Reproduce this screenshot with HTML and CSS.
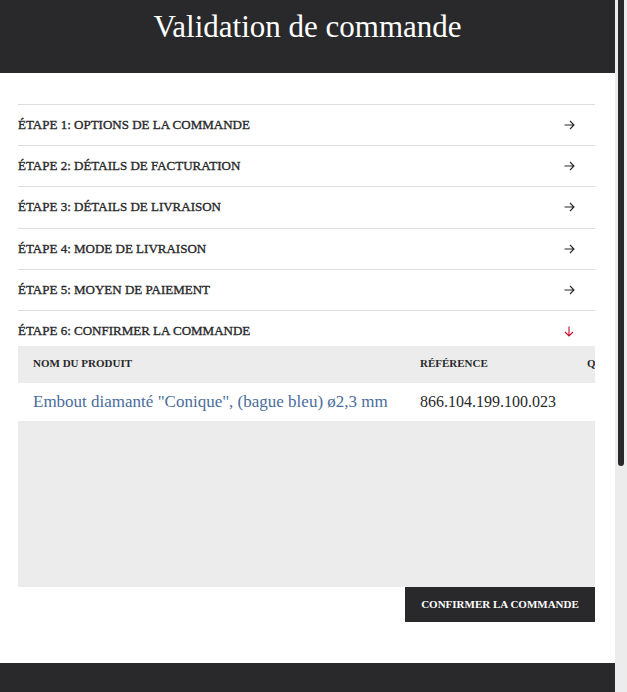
FILE: index.html
```html
<!DOCTYPE html>
<html lang="fr">
<head>
<meta charset="utf-8">
<title>Validation de commande</title>
<link rel="stylesheet" href="styles.css">
</head>
<body>
<div class="page">
<header class="page-header">
  <h1 class="page-title">Validation de commande</h1>
</header>
<main class="checkout">
  <div class="step"><span class="step-title">Étape 1: Options de la commande</span><svg class="step-icon" viewBox="0 0 11 10" width="11" height="10"><path d="M0.5 5H10M6 1l4 4-4 4"/></svg></div>
  <div class="step"><span class="step-title">Étape 2: Détails de facturation</span><svg class="step-icon" viewBox="0 0 11 10" width="11" height="10"><path d="M0.5 5H10M6 1l4 4-4 4"/></svg></div>
  <div class="step"><span class="step-title">Étape 3: Détails de livraison</span><svg class="step-icon" viewBox="0 0 11 10" width="11" height="10"><path d="M0.5 5H10M6 1l4 4-4 4"/></svg></div>
  <div class="step"><span class="step-title">Étape 4: Mode de livraison</span><svg class="step-icon" viewBox="0 0 11 10" width="11" height="10"><path d="M0.5 5H10M6 1l4 4-4 4"/></svg></div>
  <div class="step"><span class="step-title">Étape 5: Moyen de paiement</span><svg class="step-icon" viewBox="0 0 11 10" width="11" height="10"><path d="M0.5 5H10M6 1l4 4-4 4"/></svg></div>
  <div class="step step-open"><span class="step-title">Étape 6: Confirmer la commande</span><svg class="step-icon step-icon-open" viewBox="0 0 10 11" width="10" height="11"><path d="M5 0.5V10M1 6l4 4 4-4"/></svg></div>
  <div class="step-body">
    <div class="table-wrap">
      <table class="order-table">
        <colgroup><col class="col-name"><col class="col-ref"><col class="col-qty"></colgroup>
        <thead>
          <tr><th>Nom du produit</th><th>Référence</th><th>Quantité</th></tr>
        </thead>
        <tbody>
          <tr><td><a class="product-link" href="#">Embout diamanté "Conique", (bague bleu) ø2,3 mm</a></td><td class="ref-cell">866.104.199.100.023</td><td class="qty-cell"></td></tr>
        </tbody>
      </table>
    </div>
    <div class="actions"><button class="btn-confirm" type="button">Confirmer la commande</button></div>
  </div>
</main>
<footer class="page-footer"></footer>
</div>
<div class="scrollbar" aria-hidden="true"><div class="scrollbar-thumb"></div></div>
</body>
</html>
```
FILE: styles.css
```css
html, body { margin: 0; background: #fff; }
body {
  display: grid;
  grid-template-columns: 1fr 12px;
  align-items: start;
  font-family: "Liberation Serif", "Times New Roman", serif;
  color: #29292b;
}
.page { min-width: 0; }
.scrollbar {
  position: sticky;
  top: 0;
  height: 100vh;
  background: #ececec;
}
.scrollbar-thumb {
  width: 6px;
  height: 466px;
  margin-left: 3px;
  background: #29292b;
  border-radius: 0 0 3px 3px;
}
.page-header {
  background: #29292b;
  height: 73px;
  box-sizing: border-box;
  padding-top: 9px;
}
.page-title {
  margin: 0;
  font-weight: normal;
  font-size: 31px;
  line-height: 36px;
  color: #fff;
  text-align: center;
}
.checkout {
  padding: 31px 20px 41px 18px;
}
.step {
  display: flex;
  justify-content: space-between;
  align-items: flex-start;
  box-sizing: border-box;
  height: 41.2px;
  padding-top: 12px;
  line-height: 16px;
  border-top: 1px solid #dddddd;
  font-size: 13px;
  text-transform: uppercase;
}
.step-title { -webkit-text-stroke: 0.35px #29292b; }
.step-icon {
  margin: 3px 20px 0 0;
  fill: none;
  stroke: #29292b;
  stroke-width: 1.1;
}
.step-icon-open { stroke: #c8102e; margin-right: 21px; }
.step-open { height: 36px; }
.table-wrap {
  background: #ececec;
  height: 241px;
  overflow: hidden;
}
.order-table {
  table-layout: fixed;
  width: 654px;
  border-collapse: collapse;
}
.col-name { width: 387px; }
.col-ref { width: 167px; }
.col-qty { width: 100px; }
.order-table th {
  box-sizing: border-box;
  text-align: left;
  font-size: 11px;
  font-weight: bold;
  text-transform: uppercase;
  height: 37px;
  padding: 0 15px 2px;
  white-space: nowrap;
}
.order-table td {
  background: #fff;
  height: 38px;
  padding: 0 15px;
  font-size: 16px;
  white-space: nowrap;
}
.product-link { color: #4a6d9c; text-decoration: none; font-size: 17px; }
.actions { display: flex; justify-content: flex-end; }
.btn-confirm {
  background: #29292b;
  color: #fff;
  border: 0;
  height: 35px;
  width: 190px;
  font-family: inherit;
  font-size: 11px;
  font-weight: bold;
  text-transform: uppercase;
  cursor: pointer;
}
.page-footer {
  background: #29292b;
  height: 364px;
}
```
